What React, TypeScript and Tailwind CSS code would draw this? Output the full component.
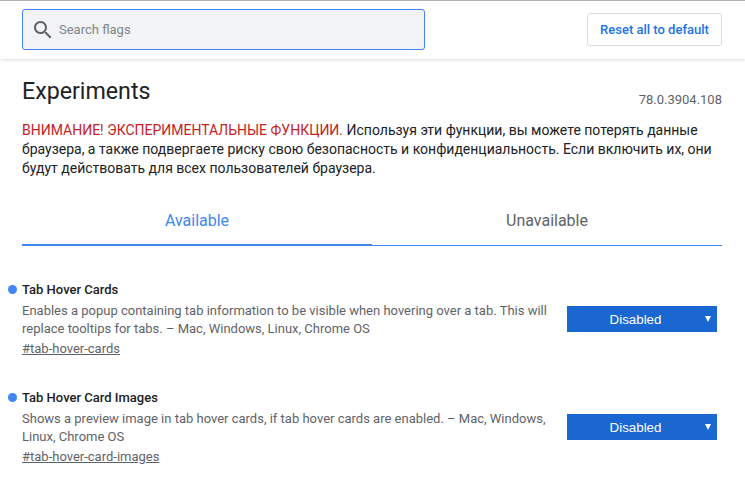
const flags = [
  {
    title: 'Tab Hover Cards',
    description:
      'Enables a popup containing tab information to be visible when hovering over a tab. This will replace tooltips for tabs. – Mac, Windows, Linux, Chrome OS',
    link: '#tab-hover-cards',
  },
  {
    title: 'Tab Hover Card Images',
    description:
      'Shows a preview image in tab hover cards, if tab hover cards are enabled. – Mac, Windows, Linux, Chrome OS',
    link: '#tab-hover-card-images',
  },
]

function FlagRow({ title, description, link }: { title: string; description: string; link: string }) {
  return (
    <div className="relative flex items-center justify-between mb-[32px]">
      <span className="absolute left-[-14px] top-[4px] w-[9px] h-[9px] rounded-full bg-[#4285f4]" />
      <div className="w-[530px]">
        <h2 className="mt-[1px] text-[13px] leading-[16px] font-medium text-[#202124]">{title}</h2>
        <p className="mt-[4px] text-[13px] leading-[18px] text-[#5f6368]">{description}</p>
        <a className="block mt-[2px] text-[13px] leading-[17px] text-[#5f6368] underline">{link}</a>
      </div>
      <div className="relative w-[150px] h-[26px] mr-[5px] pt-[2px] bg-[#1a67d2] text-white text-[13.33px] flex items-center justify-center pr-[13px] font-['Liberation_Sans',sans-serif]">
        Disabled
        <span className="absolute right-[6px] top-[10px] w-0 h-0 border-l-[3.5px] border-r-[3.5px] border-t-[6px] border-l-transparent border-r-transparent border-t-white" />
      </div>
    </div>
  )
}

export default function App() {
  return (
    <div className="w-[745px] h-[483px] overflow-hidden bg-white font-['Roboto',sans-serif]">
      {/* Header */}
      <div className="h-[59px] border-t border-[#b3b3b3] flex items-center justify-between pl-[22px] pr-[23px] pb-[1px] shadow-[0_1px_3px_rgba(0,0,0,0.14)]">
        <div className="w-[403px] h-[41px] rounded-[3px] border border-[#4285f4] bg-[#f1f3f4] flex items-center pl-[8px]">
          <svg width="24" height="24" viewBox="0 0 24 24" fill="#5f6368">
            <path d="M15.5 14h-.79l-.28-.27C15.41 12.59 16 11.11 16 9.5 16 5.91 13.09 3 9.5 3S3 5.91 3 9.5 5.91 16 9.5 16c1.61 0 3.09-.59 4.23-1.57l.27.28v.79l5 4.99L20.49 19l-4.99-5zm-6 0C7.01 14 5 11.99 5 9.5S7.01 5 9.5 5 14 7.01 14 9.5 11.99 14 9.5 14z" />
          </svg>
          <span className="ml-[4px] text-[13px] text-[#80868b]">Search flags</span>
        </div>
        <button className="w-[135px] h-[33px] rounded-[3px] border border-[#dadce0] text-[13px] font-medium text-[#1a73e8]">
          Reset all to default
        </button>
      </div>

      <div className="pl-[22px] pr-[23px]">
        <div className="flex items-start justify-between pt-[19px]">
          <h1 className="text-[23.2px] leading-[26px] text-[#202124]">Experiments</h1>
          <span className="mt-[13px] text-[13px] leading-[18px] text-[#5f6368]">78.0.3904.108</span>
        </div>

        <p className="mt-[12px] w-[700px] text-[14px] leading-[19px] text-[#202124]">
          <span className="text-[#c5221f]">ВНИМАНИЕ! ЭКСПЕРИМЕНТАЛЬНЫЕ ФУНКЦИИ.</span> Используя эти функции, вы можете потерять данные браузера, а также подвергаете риску свою безопасность и конфиденциальность. Если включить их, они будут действовать для всех пользователей браузера.
        </p>

        {/* Tabs */}
        <div className="mt-[18px] flex items-end h-[50px] text-[16px]">
          <div className="flex-1 h-[50px] pt-[2px] flex items-center justify-center border-b-2 border-[#4285f4] text-[#4285f4]">Available</div>
          <div className="flex-1 h-[50px] pt-[1px] flex items-center justify-center border-b border-[#4285f4] text-[#5f6368]">Unavailable</div>
        </div>

        <div className="mt-[35px]">
          {flags.map((flag) => (
            <FlagRow key={flag.link} {...flag} />
          ))}
        </div>
      </div>
    </div>
  )
}
